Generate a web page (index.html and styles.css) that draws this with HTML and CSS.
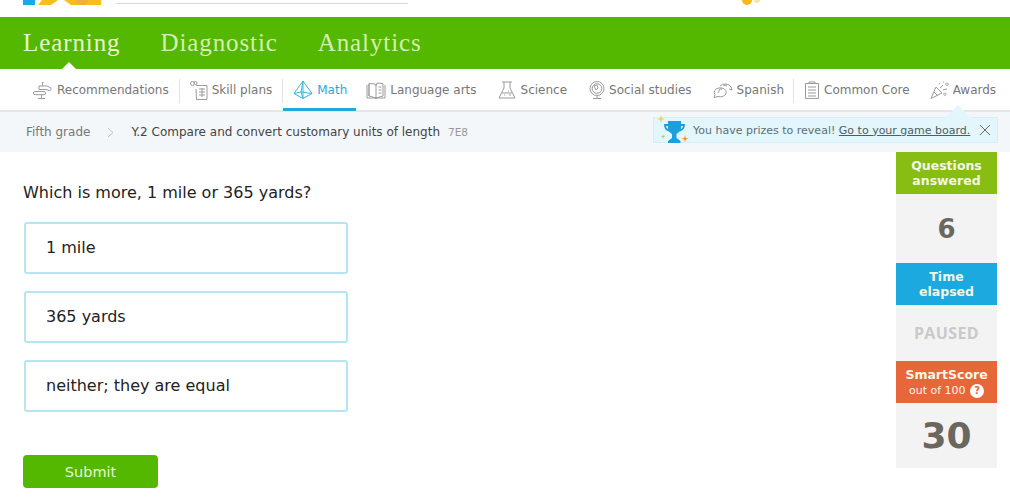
FILE: index.html
```html
<!DOCTYPE html>
<html lang="en">
<head>
<meta charset="utf-8">
<title>Compare and convert customary units of length</title>
<link rel="stylesheet" href="styles.css">
</head>
<body>
<header class="top">
  <svg class="logo" width="78" height="5" viewBox="0 0 78 5"><rect width="12" height="5" x="0" fill="#1aa9e0"/><path d="M15 5 L19 0 H35 L28 5Z" fill="#f9bd1c"/><path d="M41 0 H78 V5 H48Z" fill="#f9bd1c"/><path d="M52 0 H66 L62 5 H56Z" fill="#eeb041"/></svg>
  <div class="search"></div>
  <svg class="coin" width="24" height="6" viewBox="0 0 24 6"><circle cx="5" cy="0" r="5" fill="#f9b81c"/><circle cx="15" cy="0" r="3" fill="#f5e3a8"/></svg>
</header>
<nav class="main-nav">
  <a class="main-link active">Learning</a>
  <a class="main-link">Diagnostic</a>
  <a class="main-link">Analytics</a>
</nav>
<nav class="sub-nav">
  <a class="tab t-rec"><svg class="ic" width="20" height="20" viewBox="0 0 20 20"><path d="M9 2.5h1.5M9.5 3v3M6 6h8l3 1.5a1.5 1.5 0 0 1-1 3l-3-1H6zM2 11.5h9a1.6 1.6 0 0 1 0 3.2H2a1.6 1.6 0 0 1 0-3.2zM8.500 14.500v3.500M5 18.500h7"/></svg>Recommendations</a>
  <i class="sep"></i>
  <a class="tab t-skill"><svg class="ic" width="20" height="20" viewBox="0 0 20 20"><circle cx="3.500" cy="3.500" r="2"/><circle cx="6.500" cy="3" r="1.500"/><path d="M7 5.500h11v14H7.500L7 9M10 9h6M10 12h6M10 15h6M13 8v9"/></svg>Skill plans</a>
  <i class="sep"></i>
  <a class="tab t-math current"><svg class="ic" width="20" height="20" viewBox="0 0 20 20"><path d="M10 1 L19 13.500 L10 18.500 L1 13.500 Z M10 1 L8 12 L1 13.500 M8 12 L19 13.500 M8 12 L10 18.500 M10 1V18.500"/></svg>Math</a>
  <a class="tab t-lang"><svg class="ic" width="20" height="20" viewBox="0 0 20 20"><path d="M3 4v12l7 2 7-2V4M1 5v13h8l1 1 1-1h8V5M3 16V3.500l6 .5 1 2 1-3 6 .5M10 6v12M12.500 7h3M12.500 10h3M12.500 13h3"/></svg>Language arts</a>
  <a class="tab t-sci"><svg class="ic" width="20" height="20" viewBox="0 0 20 20"><path d="M5 2h10M7 2v6L2 18h16l-5-10V2M5 13h10M7 15h1M11 11h1M12 15h2"/></svg>Science</a>
  <a class="tab t-soc"><svg class="ic" width="20" height="20" viewBox="0 0 20 20"><circle cx="10" cy="8.500" r="7"/><circle cx="10" cy="8.500" r="4.800"/><path d="M7 6l3-1 1 3-2 2zM10 15.500v3M6 18.500h8"/></svg>Social studies</a>
  <a class="tab t-spa"><svg class="ic" width="22" height="20" viewBox="0 0 22 20"><path d="M3 17.500l1-3a6 4.500 0 1 1 3 2zM9 6a6 4 0 0 1 11 1l1 3-3-1"/><path d="M7 13l2-4h2M12 5l4 1"/></svg>Spanish</a>
  <i class="sep"></i>
  <a class="tab t-cc"><svg class="ic" width="16" height="20" viewBox="0 0 16 20"><path d="M1.500 3.500h13v15h-13zM5 3.500V2h6v1.500M4 7h8M4 10h8M4 13h8M4 16h8"/></svg>Common Core</a>
  <a class="tab t-aw"><svg class="ic" width="20" height="20" viewBox="0 0 20 20"><path d="M2 18.500L7 7l6 6zM5 12l4 4M10 3l1 1M14 2h1M18 3a1.200 1.200 0 1 1-.1 0M11 8l3-3M14 10l4-1M16 13a1.200 1.200 0 1 1-.1 0"/></svg>Awards</a>
</nav>
<div class="crumbs">
  <span class="grade">Fifth grade</span>
  <svg class="chev" width="7" height="11" viewBox="0 0 7 11"><path d="M1 1l5 4.500L1 10"/></svg>
  <span class="skill">Y.2 Compare and convert customary units of length</span>
  <span class="code">7E8</span>
</div>
<aside class="notice">
  <svg class="trophy" width="34" height="30" viewBox="0 0 34 30">
    <path d="M6 0l.8 3.200L10 4l-3.200.8L6 8l-.8-3.200L2 4l3.200-.8z" fill="#f7c93e"/>
    <path d="M8 19l.5 2 2 .5-2 .5-.5 2-.5-2-2-.5 2-.5z" fill="#8fd07a"/>
    <path d="M30 20l.7 3 3 .7-3 .7-.7 3-.7-3-3-.7 3-.7z" fill="#f58a1f"/>
    <path d="M13 6h13v3h4c0 5-3 7-5.500 7.500-1 1.200-2.500 2-3 2.500v4l4 3v2H13v-2l4-3v-4c-.5-.5-2-1.300-3-2.500C11.500 16 9 14 9 9h4zM11 11c.3 1.500 1 2.500 2.200 3.200L12.800 11zM28 11h-1.800l-.4 3.200c1.200-.7 1.900-1.700 2.200-3.200z" fill="#1d9fdc" fill-rule="evenodd"/>
  </svg>
  <span>You have prizes to reveal! <a class="board">Go to your game board.</a></span>
  <svg class="close" width="12" height="12" viewBox="0 0 12 12"><path d="M1 1l10 10M11 1L1 11"/></svg>
</aside>
<main class="practice">
  <section class="question">
    <p class="prompt">Which is more, 1 mile or 365 yards?</p>
    <div class="options">
      <div class="option">1 mile</div>
      <div class="option">365 yards</div>
      <div class="option">neither; they are equal</div>
    </div>
    <button class="submit">Submit</button>
  </section>
  <aside class="stats">
    <div class="stat-head green">Questions<br>answered</div>
    <div class="stat-val count">6</div>
    <div class="stat-head blue">Time<br>elapsed</div>
    <div class="stat-val paused">PAUSED</div>
    <div class="stat-head orange">SmartScore<br><span class="sub">out of 100 <b class="q">?</b></span></div>
    <div class="stat-val score">30</div>
  </aside>
</main>
</body>
</html>
```
FILE: styles.css
```css
* { box-sizing: border-box; }
html, body { margin: 0; padding: 0; }
body {
  width: 1010px;
  height: 502px;
  overflow: hidden;
  position: relative;
  background: #fff;
  font-family: "DejaVu Sans", Verdana, sans-serif;
  color: #222;
}
.top {
  height: 17px;
  display: flex;
  align-items: flex-start;
  padding-left: 23px;
}
.logo { display: block; }
.search {
  width: 292px;
  height: 1px;
  margin: 3px 0 0 15px;
  background: #d9d9d9;
}
.coin { display: block; margin-left: 334px; }

.main-nav {
  height: 52px;
  background: #54b700;
  display: flex;
  gap: 40px;
  padding-left: 23px;
  align-items: center;
}
.main-link {
  font-family: "Liberation Serif", serif;
  font-size: 25px;
  letter-spacing: 0.9px;
  color: #d4efb0;
  position: relative;
  line-height: 52px;
}
.main-link.active { color: #e6f7cf; }
.main-link.active::after {
  content: "";
  position: absolute;
  left: 39px;
  bottom: 0;
  border: 7px solid transparent;
  border-top: 0;
  border-bottom-color: #fff;
}

.sub-nav {
  height: 43px;
  border-bottom: 2px solid #e4e6e8;
  display: flex;
  align-items: stretch;
  font-size: 12px;
  color: #777;
  padding-left: 33px;
}
.tab {
  display: flex;
  align-items: center;
  height: 41px;
  position: relative;
}
.ic {
  fill: none;
  stroke: #9b9b9b;
  stroke-width: 1;
  margin-right: 4px;
  flex: none;
}
.sep {
  width: 1px;
  height: 24px;
  margin-top: 10px;
  background: #e3e3e3;
  flex: none;
}
.t-rec { margin-right: 10px; }
.t-skill { margin-left: 9px; margin-right: 10px; }
.t-skill .ic { margin-right: 3px; }
.t-math {
  padding: 0 10px;
  width: 73px;
  color: #2aa9d8;
  border-bottom: 3px solid #22a8dd;
  height: 42px;
  padding-top: 3px;
}
.t-math .ic { stroke: #3fb3dd; margin-right: 4px; }
.t-lang { margin-left: 10px; }
.t-sci { margin-left: 20px; }
.t-soc { margin-left: 20px; }
.t-soc .ic { margin-right: 2px; }
.t-spa { margin-left: 19px; margin-right: 9px; }
.t-spa .ic { margin-right: 4px; }
.t-cc { margin-left: 10px; }
.t-aw { margin-left: 19px; }

.crumbs {
  height: 40px;
  background: #f3f7fa;
  display: flex;
  align-items: center;
  padding-left: 26px;
  font-size: 12px;
}
.grade { color: #777; }
.chev {
  margin: 0 17px 0 17px;
  fill: none;
  stroke: #c4c4c4;
  stroke-width: 1;
}
.skill { color: #444; }
.code { color: #999; font-size: 10.500px; margin-left: 8px; }

.notice {
  position: absolute;
  left: 653px;
  top: 117px;
  width: 345px;
  height: 26px;
  background: #e3f6fc;
  border: 1px solid #d7eef6;
  display: flex;
  align-items: center;
  font-size: 11px;
  color: #5e6f76;
}
.notice::before {
  content: "";
  position: absolute;
  left: 291px;
  top: -13px;
  border: 13px solid transparent;
  border-top: 0;
  border-bottom-color: #e3f6fc;
}
.notice > span { position: relative; white-space: nowrap; }
.trophy { position: absolute; left: 1px; top: -3px; }
.notice > span { margin-left: 39px; }
.board { color: #4d5d63; text-decoration: underline; }
.close {
  position: absolute;
  right: 6px;
  top: 6px;
  fill: none;
  stroke: #6a6a6a;
  stroke-width: 1;
}

.practice {
  display: flex;
  justify-content: space-between;
  padding: 0 13px 0 23px;
}
.question { width: 325px; padding-top: 31px; }
.prompt {
  margin: 0 0 19px;
  font-size: 16px;
  line-height: 20px;
  color: #222;
}
.options {
  display: flex;
  flex-direction: column;
  gap: 17px;
  margin-left: 1px;
}
.option {
  height: 52px;
  border: 2px solid #b5e5f1;
  border-radius: 3px;
  padding-left: 20px;
  font-size: 16px;
  line-height: 48px;
  color: #222;
}
.submit {
  display: block;
  margin-top: 43px;
  width: 135px;
  height: 33px;
  background: #54b700;
  border: 0;
  border-radius: 4px;
  color: #e6f7cf;
  font-family: inherit;
  font-size: 14.500px;
  padding: 0;
}
.stats { width: 101px; display: flex; flex-direction: column; text-align: center; }
.stat-head {
  height: 42px;
  color: #f2f7e6;
  font-weight: bold;
  font-size: 12.500px;
  line-height: 15px;
  padding-top: 6px;
}
.green { background: #88bd13; }
.blue { background: #1ba9e0; }
.orange { background: #e8673a; padding-top: 6px; }
.sub { font-weight: normal; font-size: 11px; }
.q {
  display: inline-block;
  width: 14px;
  height: 14px;
  border-radius: 50%;
  background: #fff;
  color: #e8673a;
  font-size: 10px;
  line-height: 14px;
  vertical-align: 0;
  margin-left: 1px;
}
.stat-val { background: #f3f3f4; font-weight: bold; display: flex; align-items: center; justify-content: center; color: #6a675f; }
.count { height: 69px; font-size: 26px; }
.paused { height: 56px; font-size: 16px; color: #c9c9c9; font-family: "Open Sans", sans-serif; letter-spacing: .4px; }
.score { height: 65px; font-size: 36px; }
```
